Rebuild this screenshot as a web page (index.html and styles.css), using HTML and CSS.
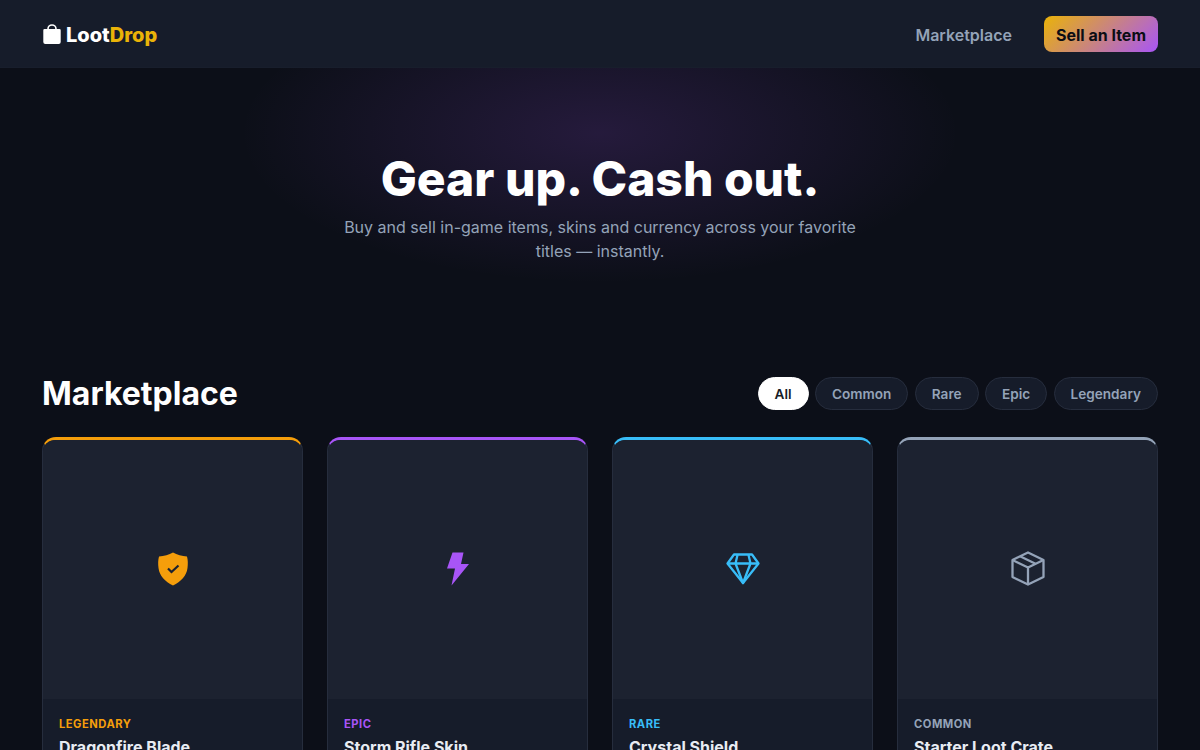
FILE: index.html
```html
<!DOCTYPE html>
<html lang="en">
<head>
<meta charset="utf-8">
<title>LootDrop</title>
<link rel="stylesheet" href="styles.css">
</head>
<body>
<header class="nav">
  <a class="logo">
    <svg class="logo-icon" viewBox="0 0 18 20" width="18" height="20"><path d="M5 6V5a4 4 0 0 1 8 0v1" fill="none" stroke="#fff" stroke-width="1.600"/><path d="M1.500 5h15A1.200 1.200 0 0 1 17.700 6.200V18a2 2 0 0 1-2 2H2.300a2 2 0 0 1-2-2V6.200A1.200 1.200 0 0 1 1.500 5z" fill="#fff"/></svg>
    <span>Loot<em>Drop</em></span>
  </a>
  <nav class="nav-links">
    <a class="nav-link">Marketplace</a>
    <button class="sell">Sell an Item</button>
  </nav>
</header>
<section class="hero">
  <h1>Gear up. Cash out.</h1>
  <p>Buy and sell in-game items, skins and currency across your favorite titles — instantly.</p>
</section>
<main class="market">
  <div class="market-head">
    <h2>Marketplace</h2>
    <div class="filters">
      <button class="pill active">All</button>
      <button class="pill">Common</button>
      <button class="pill">Rare</button>
      <button class="pill">Epic</button>
      <button class="pill">Legendary</button>
    </div>
  </div>
  <div class="grid">
    <article class="card legendary">
      <div class="art">
        <svg viewBox="0 0 36 36" width="36" height="36"><path d="M18 1.500C22 4 27 5 32 5.500 33 9 33 13 32.500 17 31.500 25 26 30.500 18 34.500 10 30.500 4.500 25 3.500 17 3 13 3 9 4 5.500 9 5 14 4 18 1.500z" fill="#f59e0b"/><path d="M13 17.500l3.500 3.500L23.500 14.500" fill="none" stroke="#1c2230" stroke-width="2.200"/></svg>
      </div>
      <div class="info"><span class="tag">LEGENDARY</span><h3>Dragonfire Blade</h3></div>
    </article>
    <article class="card epic">
      <div class="art">
        <svg viewBox="0 0 36 36" width="36" height="36"><path d="M12.500 1.500h11l-2.500 11.500h8L11.500 34.500l3.500-17H7z" fill="#a855f7"/></svg>
      </div>
      <div class="info"><span class="tag">EPIC</span><h3>Storm Rifle Skin</h3></div>
    </article>
    <article class="card rare">
      <div class="art">
        <svg viewBox="0 0 36 36" width="36" height="36" fill="none" stroke="#38bdf8" stroke-width="2.300" stroke-linejoin="round"><path d="M9 3.500h18l6.500 9L18 32 2.500 12.500z"/><path d="M2.500 12.500h31M12.500 4 10.500 12.500 18 32l7.500-19.500L23.500 4"/></svg>
      </div>
      <div class="info"><span class="tag">RARE</span><h3>Crystal Shield</h3></div>
    </article>
    <article class="card common">
      <div class="art">
        <svg viewBox="0 0 36 36" width="36" height="36" fill="none" stroke="#94a3b8" stroke-width="2.300" stroke-linejoin="round"><path d="M18 1.500 33.500 9v17L18 33.500 2.500 26V9z"/><path d="M2.500 9 18 16.500 33.500 9M18 16.500v17M10 5.200 25.500 12.700"/></svg>
      </div>
      <div class="info"><span class="tag">COMMON</span><h3>Starter Loot Crate</h3></div>
    </article>
  </div>
</main>
</body>
</html>
```

FILE: styles.css
```css
* { box-sizing: border-box; }
html, body { margin: 0; height: 750px; overflow: hidden; }
body { background: #0c0f18; color: #fff; font-family: Inter, "Liberation Sans", sans-serif; }
.nav { height: 68px; padding: 0 42px; display: flex; align-items: center; justify-content: space-between; background: #161c2a; border-bottom: 1px solid #181e2c; }
.logo { display: flex; align-items: center; gap: 5px; margin-left: 1px; padding-top: 2px; font-size: 20px; font-weight: 800; }
.logo em { font-style: normal; color: #eab308; }
.logo-icon { display: block; margin-top: -1px; }
.nav-links { display: flex; align-items: center; gap: 32px; }
.nav-link { padding-top: 2px; color: #94a3b8; font-size: 16px; font-weight: 600; }
.sell { height: 36px; padding: 2px 12px 0; border: 0; border-radius: 8px; background: linear-gradient(135deg, #eab308, #a855f7); color: #0b0d14; font: 700 16px Inter, sans-serif; }
.hero { height: 262px; padding-top: 82px; text-align: center; background: radial-gradient(ellipse 360px 150px at 50% 65px, rgba(168,85,247,0.16), rgba(168,85,247,0) 100%); }
.hero h1 { margin: 0; font-size: 48px; line-height: 58px; font-weight: 800; }
.hero p { width: 540px; margin: 7px auto 0; color: #94a3b8; font-size: 16px; line-height: 24px; }
.market { padding: 47px 42px 0; }
.market-head { display: flex; align-items: center; justify-content: space-between; margin-bottom: 27px; }
.market-head h2 { margin: 0; font-size: 32px; line-height: 33px; font-weight: 700; }
.filters { display: flex; gap: 6.4px; }
.pill { height: 33px; padding: 0 16px; border: 1px solid #262d3d; border-radius: 17px; background: #161c2a; color: #94a3b8; font: 600 13.6px Inter, sans-serif; }
.pill.active { background: #fff; border-color: #fff; color: #161b27; }
.grid { display: grid; grid-template-columns: repeat(4, 1fr); gap: 24px; }
.card { border: 1px solid #262d3d; border-top: 3px solid; border-radius: 14px; background: #161c2a; overflow: hidden; }
.art { height: 259px; padding-bottom: 2px; display: flex; align-items: center; justify-content: center; background: #1c2230; }
.info { padding: 16px; }
.tag { display: block; font-size: 11.2px; line-height: 18px; font-weight: 700; letter-spacing: 0.5px; }
.info h3 { margin: 3px 0 0; font-size: 16px; line-height: 22px; font-weight: 700; color: #e8ecf3; }
.legendary { border-top-color: #f59e0b; }
.legendary .tag { color: #f59e0b; }
.epic { border-top-color: #a855f7; }
.epic .tag { color: #a855f7; }
.rare { border-top-color: #38bdf8; }
.rare .tag { color: #38bdf8; }
.common { border-top-color: #94a3b8; }
.common .tag { color: #94a3b8; }
```
